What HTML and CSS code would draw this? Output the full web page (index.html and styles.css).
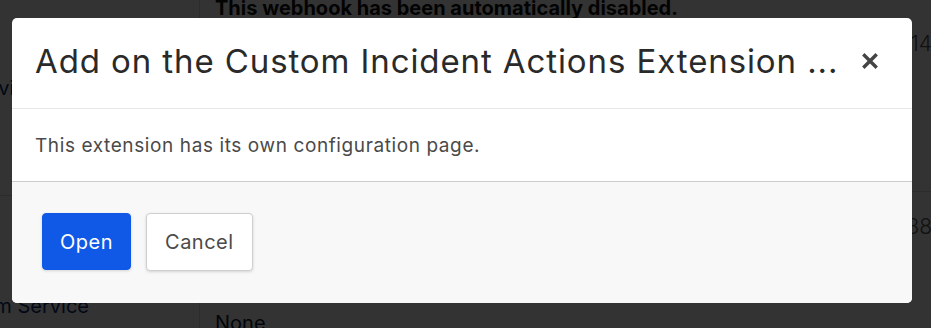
FILE: index.html
```html
<html>
<head>
    <meta charset="UTF-8">
    <title>Extensions</title>
    <link rel="stylesheet" href="styles.css">
</head>
<body>
    <div class="page">
        <div class="sidebar">
            <div class="side-item">Services</div>
            <div class="side-item lower">Custom Service</div>
        </div>
        <div class="main">
            <div class="row first">
                <div class="notice">This webhook has been automatically disabled.</div>
                <div class="count">14</div>
            </div>
            <div class="row second">
                <div class="count">38</div>
                <div class="none">None</div>
            </div>
        </div>
    </div>

    <div class="backdrop"></div>

    <div class="modal">
        <div class="modal-header">
            <h2 class="modal-title">Add on the Custom Incident Actions Extension ...</h2>
            <button class="close" aria-label="Close">
                <svg width="16" height="16" viewBox="0 0 16 16">
                    <path d="M2.5 2.5 L13.5 13.5 M13.5 2.5 L2.5 13.5" stroke="#444" stroke-width="3.4" stroke-linecap="square"/>
                </svg>
            </button>
        </div>
        <div class="modal-body">
            This extension has its own configuration page.
        </div>
        <div class="modal-footer">
            <button class="btn btn-primary">Open</button>
            <button class="btn btn-default">Cancel</button>
        </div>
    </div>
</body>
</html>
```

FILE: styles.css
```css
html, body {
    height: 328px;
    overflow: hidden;
}

body {
    margin: 0;
    font-family: Inter, "Noto Sans", sans-serif;
    background-color: #fff;
    color: #222;
}

.page {
    display: flex;
    height: 328px;
    overflow: hidden;
}

.sidebar {
    width: 199px;
    border-right: 1px solid #ddd;
    overflow: hidden;
}

.side-item {
    margin-left: -34px;
    font-size: 20px;
    color: #0b2e6e;
    height: 196px;
    padding-top: 76px;
    box-sizing: border-box;
    border-bottom: 1px solid #ddd;
    white-space: nowrap;
}

.side-item.lower {
    margin-left: -61px;
    padding-top: 98px;
    border-bottom: 0;
}

.main {
    flex: 1;
    overflow: hidden;
}

.row {
    height: 196px;
    box-sizing: border-box;
    border-bottom: 1px solid #ddd;
    padding-left: 15px;
}

.notice {
    font-weight: 700;
    font-size: 20px;
    margin-top: -4px;
    color: #111;
    white-space: nowrap;
}

.count {
    font-size: 21px;
    font-weight: 300;
    color: #555;
    text-align: right;
    margin-right: -1px;
    margin-top: 11px;
}

.second .count {
    margin-top: 22px;
}

.none {
    font-size: 20px;
    color: #0b1d3a;
    margin-top: 72px;
}

.backdrop {
    position: absolute;
    left: 0;
    top: 0;
    right: 0;
    bottom: 0;
    background-color: rgba(0, 0, 0, 0.8);
}

.modal {
    position: absolute;
    left: 12px;
    top: 18px;
    width: 900px;
    height: 285px;
    background-color: #fff;
    border-radius: 5px;
    overflow: hidden;
    display: flex;
    flex-direction: column;
}

.modal-header {
    display: flex;
    align-items: center;
    justify-content: space-between;
    height: 91px;
    box-sizing: border-box;
    padding: 0 34px 4px 23px;
    border-bottom: 1px solid #e8e8e8;
}

.modal-title {
    margin: 0;
    font-size: 33px;
    font-weight: 400;
    letter-spacing: 0.9px;
    color: #2a2a2a;
    white-space: nowrap;
}

.close {
    border: 0;
    background: none;
    padding: 0;
    width: 16px;
    height: 16px;
    cursor: pointer;
}

.modal-body {
    height: 73px;
    box-sizing: border-box;
    padding: 25px 23px 0;
    font-size: 19px;
    letter-spacing: 0.6px;
    color: #4a4a4a;
    border-bottom: 1px solid #cdcdcd;
}

.modal-footer {
    flex: 1;
    background-color: #f8f8f8;
    padding: 31px 30px;
    display: flex;
    align-items: flex-start;
    gap: 15px;
}

.btn {
    height: 57px;
    font-family: Inter, "Noto Sans", sans-serif;
    font-size: 20px;
    letter-spacing: 0.5px;
    border-radius: 4px;
    cursor: pointer;
    box-shadow: 0 1px 3px rgba(0, 0, 0, 0.15);
}

.btn-primary {
    padding: 0 17px;
    background-color: #1059e6;
    color: #fff;
    border: 1px solid #1059e6;
}

.btn-default {
    padding: 0 18px;
    background-color: #fff;
    color: #4a4a4a;
    border: 1px solid #cfcfcf;
    height: 58px;
}
```
